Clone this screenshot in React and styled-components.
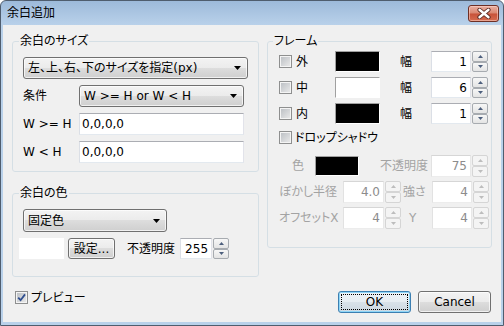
import React from 'react';
import styled, { createGlobalStyle } from 'styled-components';

const GlobalStyle = createGlobalStyle`
  html, body { margin: 0; padding: 0; background: #fff; }
  body {
    font-family: "DejaVu Sans", "Noto Sans CJK JP", sans-serif;
    font-size: 12px;
    font-feature-settings: "palt";
    color: #000;
  }
  * { box-sizing: border-box; }
`;

const Window = styled.div`
  width: 504px;
  height: 326px;
  display: flex;
  flex-direction: column;
  border: 1px solid #4f5d6e;
  border-radius: 6px 6px 0 0;
  background: linear-gradient(#9dbada, #b9d1ea 24px, #b9d1ea);
  overflow: hidden;
`;

const TitleBar = styled.div`
  height: 24px;
  flex: none;
  display: flex;
  align-items: center;
  justify-content: space-between;
  padding: 0 4px 0 6px;
  line-height: 14px;
`;

const CloseButton = styled.div`
  width: 31px;
  height: 17px;
  display: flex;
  align-items: center;
  justify-content: center;
  border: 1px solid #6e2f25;
  border-radius: 3px;
  background: linear-gradient(#eab0a2, #d98670 48%, #c75239 52%, #d66c50);
  box-shadow: inset 0 0 0 1px rgba(255, 220, 210, 0.5);
`;

const Client = styled.div`
  flex: 1;
  margin: 0 2px 3px;
  background: #f0f0f0;
  padding: 9px;
  display: grid;
  grid-template-columns: 247px 225px;
  column-gap: 8px;
`;

const Column = styled.div`
  display: flex;
  flex-direction: column;
`;

const Group = styled.fieldset`
  margin: ${p => p.$mt || 0}px 0 0;
  min-width: 0;
  border: 1px solid #d5dfe5;
  border-radius: 3px;
  padding: ${p => p.$pad};
`;

const Legend = styled.legend`
  padding: 0 1px;
  margin-left: ${p => p.$ml}px;
  line-height: 14px;
`;

const SizeGrid = styled.div`
  display: grid;
  grid-template-columns: 56px 1fr 4px;
  grid-auto-rows: 22px;
  row-gap: 6px;
  align-items: center;
`;

const Label = styled.span`
  display: block;
  width: ${p => (p.$w ? `${p.$w}px` : 'auto')};
  padding-left: ${p => p.$pl || 0}px;
  padding-right: ${p => p.$pr || 0}px;
  margin-left: ${p => p.$ml || 0}px;
  text-align: ${p => p.$align || 'left'};
  color: ${p => (p.$disabled ? '#a3a3a3' : '#000')};
  white-space: nowrap;
  line-height: 14px;
`;

const ComboBox = styled.div`
  grid-column: ${p => (p.$full ? '1 / -1' : 'auto')};
  width: ${p => (p.$w ? `${p.$w}px` : 'auto')};
  height: ${p => p.$h || 22}px;
  display: flex;
  align-items: center;
  justify-content: space-between;
  padding: 0 6px 0 4px;
  border: 1px solid #707070;
  border-radius: 3px;
  background: linear-gradient(#f3f3f3, #ebebeb 50%, #dddddd 50%, #cfcfcf);
  box-shadow: inset 0 0 0 1px rgba(255, 255, 255, 0.7);
  white-space: nowrap;
  line-height: 14px;
`;

const TextBox = styled.input`
  height: 22px;
  width: 100%;
  margin: 0;
  padding: 0 2px;
  font: inherit;
  color: #000;
  background: #fff;
  border: 1px solid;
  border-color: #abadb3 #e2e3ea #e3e9ef #dbdfe6;
  outline: none;
`;

const Swatch = styled.div`
  width: ${p => p.$w}px;
  height: ${p => p.$h || 21}px;
  flex: none;
  background: ${p => p.$color};
  border: 1px solid;
  border-color: ${p => (p.$flat ? p.$color : '#a0a0a0 #ffffff #ffffff #a0a0a0')};
  margin-left: ${p => p.$ml || 0}px;
`;

const PushButton = styled.div`
  position: relative;
  width: ${p => p.$w}px;
  height: ${p => p.$h || 22}px;
  flex: none;
  display: flex;
  align-items: center;
  justify-content: center;
  border: 1px solid ${p => (p.$default ? '#3c7fb1' : '#707070')};
  border-radius: 3px;
  background: ${p => (p.$default
    ? 'linear-gradient(#eef3f7, #e6edf2 50%, #d9e2e9 50%, #cdd8e1)'
    : 'linear-gradient(#f3f3f3, #ebebeb 50%, #dddddd 50%, #cfcfcf)')};
  box-shadow: inset 0 0 0 1px ${p => (p.$default ? '#8fd6f7' : 'rgba(255,255,255,0.7)')};
  line-height: 14px;
  margin-left: ${p => p.$ml || 0}px;

  &::after {
    content: '';
    display: ${p => (p.$default ? 'block' : 'none')};
    position: absolute;
    inset: 2px;
    border: 1px dotted #000;
  }
`;

const Row = styled.div`
  display: flex;
  align-items: center;
  height: ${p => p.$h || 21}px;
  margin-top: ${p => p.$mt || 0}px;
  margin-left: ${p => p.$ml || 0}px;
`;

const CheckBoxBox = styled.div`
  width: 13px;
  height: 13px;
  flex: none;
  display: flex;
  align-items: center;
  justify-content: center;
  border: 1px solid #8e8f8f;
  background: linear-gradient(135deg, #b9bdc2, #ececec);
  box-shadow: inset 0 0 0 1px #f4f4f4;
`;

const CheckLabel = styled.div`
  display: flex;
  align-items: center;
  gap: ${p => p.$gap || 4}px;
  width: ${p => (p.$w ? `${p.$w}px` : 'auto')};
  flex: none;
  line-height: 14px;
`;

const SpinWrap = styled.div`
  display: flex;
  flex: none;
  height: ${p => p.$h || 21}px;
`;

const SpinText = styled.div`
  width: ${p => p.$w}px;
  height: 100%;
  padding-right: 3px;
  display: flex;
  align-items: center;
  justify-content: flex-end;
  background: #fff;
  color: ${p => (p.$disabled ? '#8c8c8c' : '#000')};
  border: 1px solid;
  border-color: ${p => (p.$disabled
    ? '#d6d6d6 #e8e8e8 #ececec #e2e2e2'
    : '#abadb3 #e2e3ea #e3e9ef #dbdfe6')};
  line-height: 14px;
`;

const Arrows = styled.div`
  width: 17px;
  display: flex;
  flex-direction: column;
  padding-left: 1px;
`;

const ArrowBtn = styled.div`
  flex: 1;
  display: flex;
  align-items: center;
  justify-content: center;
  border: 1px solid ${p => (p.$disabled ? '#d5d5d5' : '#a7abb0')};
  border-radius: 2px;
  background: ${p => (p.$disabled ? '#f4f4f4' : 'linear-gradient(#f7f7f7, #e4e4e4)')};
`;

const ButtonRow = styled.div`
  margin-top: auto;
  display: flex;
  justify-content: flex-end;
  gap: 7px;
  padding-right: 1px;
`;

const Check = ({ checked }) => (
  <CheckBoxBox>
    {checked && (
      <svg width="9" height="9" viewBox="0 0 9 9">
        <path d="M1.2 4.6 L3.6 7.2 L8 1.4" stroke="#2f4e8f" strokeWidth="1.8" fill="none" />
      </svg>
    )}
  </CheckBoxBox>
);

const Combo = ({ children, ...rest }) => (
  <ComboBox {...rest}>
    <span>{children}</span>
    <svg width="7" height="4" viewBox="0 0 7 4">
      <path d="M0 0 H7 L3.5 4 Z" fill="#000" />
    </svg>
  </ComboBox>
);

const Spin = ({ w, value, disabled, h }) => {
  const fill = disabled ? '#bdbdbd' : '#4d5f7d';
  return (
    <SpinWrap $h={h}>
      <SpinText $w={w} $disabled={disabled}>{value}</SpinText>
      <Arrows>
        <ArrowBtn $disabled={disabled}>
          <svg width="5" height="3" viewBox="0 0 5 3"><path d="M0 3 L2.5 0 L5 3 Z" fill={fill} /></svg>
        </ArrowBtn>
        <ArrowBtn $disabled={disabled}>
          <svg width="5" height="3" viewBox="0 0 5 3"><path d="M0 0 L2.5 3 L5 0 Z" fill={fill} /></svg>
        </ArrowBtn>
      </Arrows>
    </SpinWrap>
  );
};

const frameRows = [
  { label: '外', color: '#000', width: 1 },
  { label: '中', color: '#fff', width: 6 },
  { label: '内', color: '#000', width: 1 },
];

export default function App() {
  return (
    <>
      <GlobalStyle />
      <Window>
        <TitleBar>
          <span>余白追加</span>
          <CloseButton>
            <svg width="14" height="11" viewBox="0 0 14 11">
              <path d="M2.5 1.8 L11.5 9.2 M11.5 1.8 L2.5 9.2" stroke="#5b2a22" strokeWidth="4.2" strokeLinecap="round" />
              <path d="M2.5 1.8 L11.5 9.2 M11.5 1.8 L2.5 9.2" stroke="#fff" strokeWidth="2.4" strokeLinecap="round" />
            </svg>
          </CloseButton>
        </TitleBar>

        <Client>
          <Column>
            <Group $pad="9px 10px 8px">
              <Legend $ml={-4}>余白のサイズ</Legend>
              <SizeGrid>
                <Combo $full>左、上、右、下のサイズを指定(px)</Combo>
                <Label>条件</Label>
                <Combo>W &gt;= H or W &lt; H</Combo>
                <span />
                <Label>W &gt;= H</Label>
                <TextBox readOnly value="0,0,0,0" />
                <span />
                <Label>W &lt; H</Label>
                <TextBox readOnly value="0,0,0,0" />
              </SizeGrid>
            </Group>

            <Group $mt={14} $pad="9px 10px 17px">
              <Legend $ml={-4}>余白の色</Legend>
              <Combo $w={144} $h={23}>固定色</Combo>
              <Row $mt={6}>
                <Swatch $w={45} $color="#fff" $flat $ml={-4} />
                <PushButton $w={47} $h={21} $ml={4}>設定...</PushButton>
                <Label $ml={12} $pr={5}>不透明度</Label>
                <Spin w={32} value={255} />
              </Row>
            </Group>

            <Row $mt={14} $h={13} $ml={3}>
              <CheckLabel $gap={3}>
                <Check checked />
                <span>プレビュー</span>
              </CheckLabel>
            </Row>
          </Column>

          <Column>
            <Group $pad="3px 2px 18px 11px">
              <Legend $ml={-6}>フレーム</Legend>
              {frameRows.map((r, i) => (
                <Row key={r.label} $mt={i === 0 ? 0 : 5}>
                  <CheckLabel $w={56}>
                    <Check />
                    <span>{r.label}</span>
                  </CheckLabel>
                  <Swatch $w={45} $color={r.color} />
                  <Label $w={31} $ml={20}>幅</Label>
                  <Spin w={40} value={r.width} />
                </Row>
              ))}

              <Row $mt={7} $h={13}>
                <CheckLabel $gap={3}>
                  <Check />
                  <span>ドロップシャドウ</span>
                </CheckLabel>
              </Row>

              <Row $mt={11} $h={22}>
                <Label $w={36} $pl={13} $disabled>色</Label>
                <Swatch $w={44} $h={20} $color="#000" />
                <Label $w={72} $pr={3} $align="right" $disabled>不透明度</Label>
                <Spin w={40} value={75} disabled h={22} />
              </Row>
              <Row $mt={4} $h={22}>
                <Label $w={64} $disabled>ぼかし半径</Label>
                <Spin w={41} value="4.0" disabled h={22} />
                <Label $w={31} $pl={2} $disabled>強さ</Label>
                <Spin w={40} value={4} disabled h={22} />
              </Row>
              <Row $mt={4} $h={22}>
                <Label $w={64} $disabled>オフセットX</Label>
                <Spin w={41} value={4} disabled h={22} />
                <Label $w={31} $pl={8} $disabled>Y</Label>
                <Spin w={40} value={4} disabled h={22} />
              </Row>
            </Group>

            <ButtonRow>
              <PushButton $w={73} $default>OK</PushButton>
              <PushButton $w={73}>Cancel</PushButton>
            </ButtonRow>
          </Column>
        </Client>
      </Window>
    </>
  );
}
